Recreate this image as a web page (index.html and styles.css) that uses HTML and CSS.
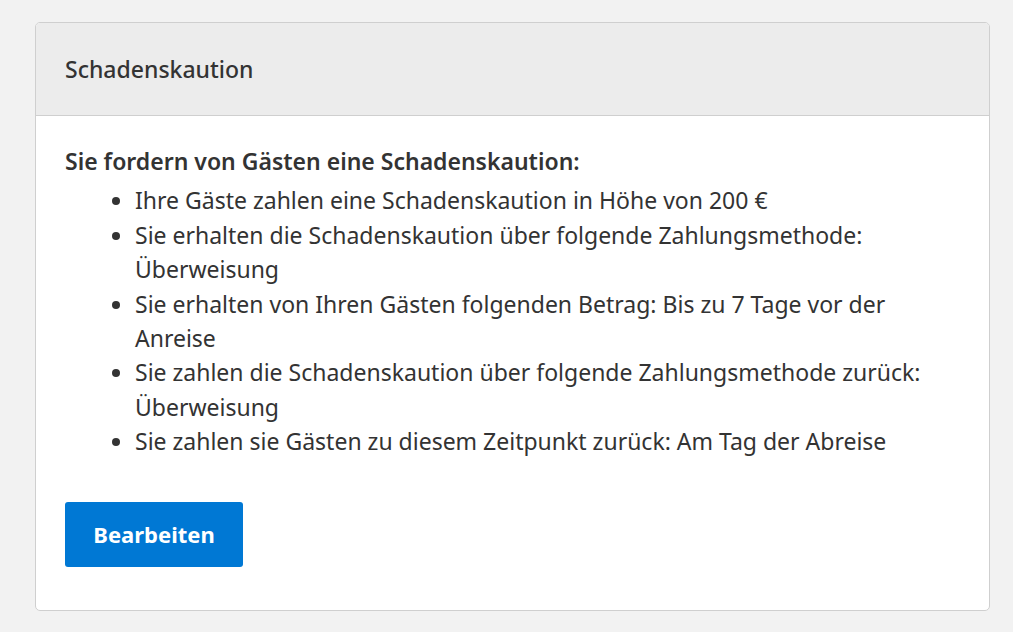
FILE: index.html
```html
<!DOCTYPE html>
<html lang="de">
<head>
  <meta charset="UTF-8" />
  <title>Schadenskaution</title>
  <link rel="stylesheet" href="styles.css">
</head>
<body>
  <div class="card">
    <div class="card-header">Schadenskaution</div>
    <div class="card-body">
      <p class="lead">Sie fordern von Gästen eine Schadenskaution:</p>
      <ul class="details">
        <li>Ihre Gäste zahlen eine Schadenskaution in Höhe von 200 €</li>
        <li>Sie erhalten die Schadenskaution über folgende Zahlungsmethode: Überweisung</li>
        <li>Sie erhalten von Ihren Gästen folgenden Betrag: Bis zu 7 Tage vor der Anreise</li>
        <li>Sie zahlen die Schadenskaution über folgende Zahlungsmethode zurück: Überweisung</li>
        <li>Sie zahlen sie Gästen zu diesem Zeitpunkt zurück: Am Tag der Abreise</li>
      </ul>
      <button class="btn">Bearbeiten</button>
    </div>
  </div>
</body>
</html>
```

FILE: styles.css
```css
body {
  margin: 0;
  padding: 22px 22px 0 35px;
  background-color: #f2f2f2;
  font-family: "Noto Sans", "Open Sans", sans-serif;
  color: #333;
}
.card {
  width: 953px;
  background-color: #fff;
  border: 1px solid #cfcfcf;
  border-radius: 5px;
  overflow: hidden;
}
.card-header {
  background-color: #ececec;
  border-bottom: 1px solid #cfcfcf;
  height: 92px;
  padding-left: 29px;
  display: flex;
  align-items: center;
  font-size: 23px;
  font-weight: 500;
}
.card-body {
  padding: 28px 29px 43px;
  font-size: 23px;
  line-height: 34.4px;
}
.lead {
  margin: 0 0 5px;
  font-weight: 600;
}
.details {
  margin: 0;
  padding-left: 70px;
}
.btn {
  margin-top: 43px;
  width: 178px;
  height: 65px;
  border: none;
  border-radius: 3px;
  background-color: #0078d4;
  color: #fff;
  font-family: inherit;
  font-size: 22px;
  font-weight: 700;
  cursor: pointer;
}
.btn:hover {
  background-color: #106ebe;
}
```
